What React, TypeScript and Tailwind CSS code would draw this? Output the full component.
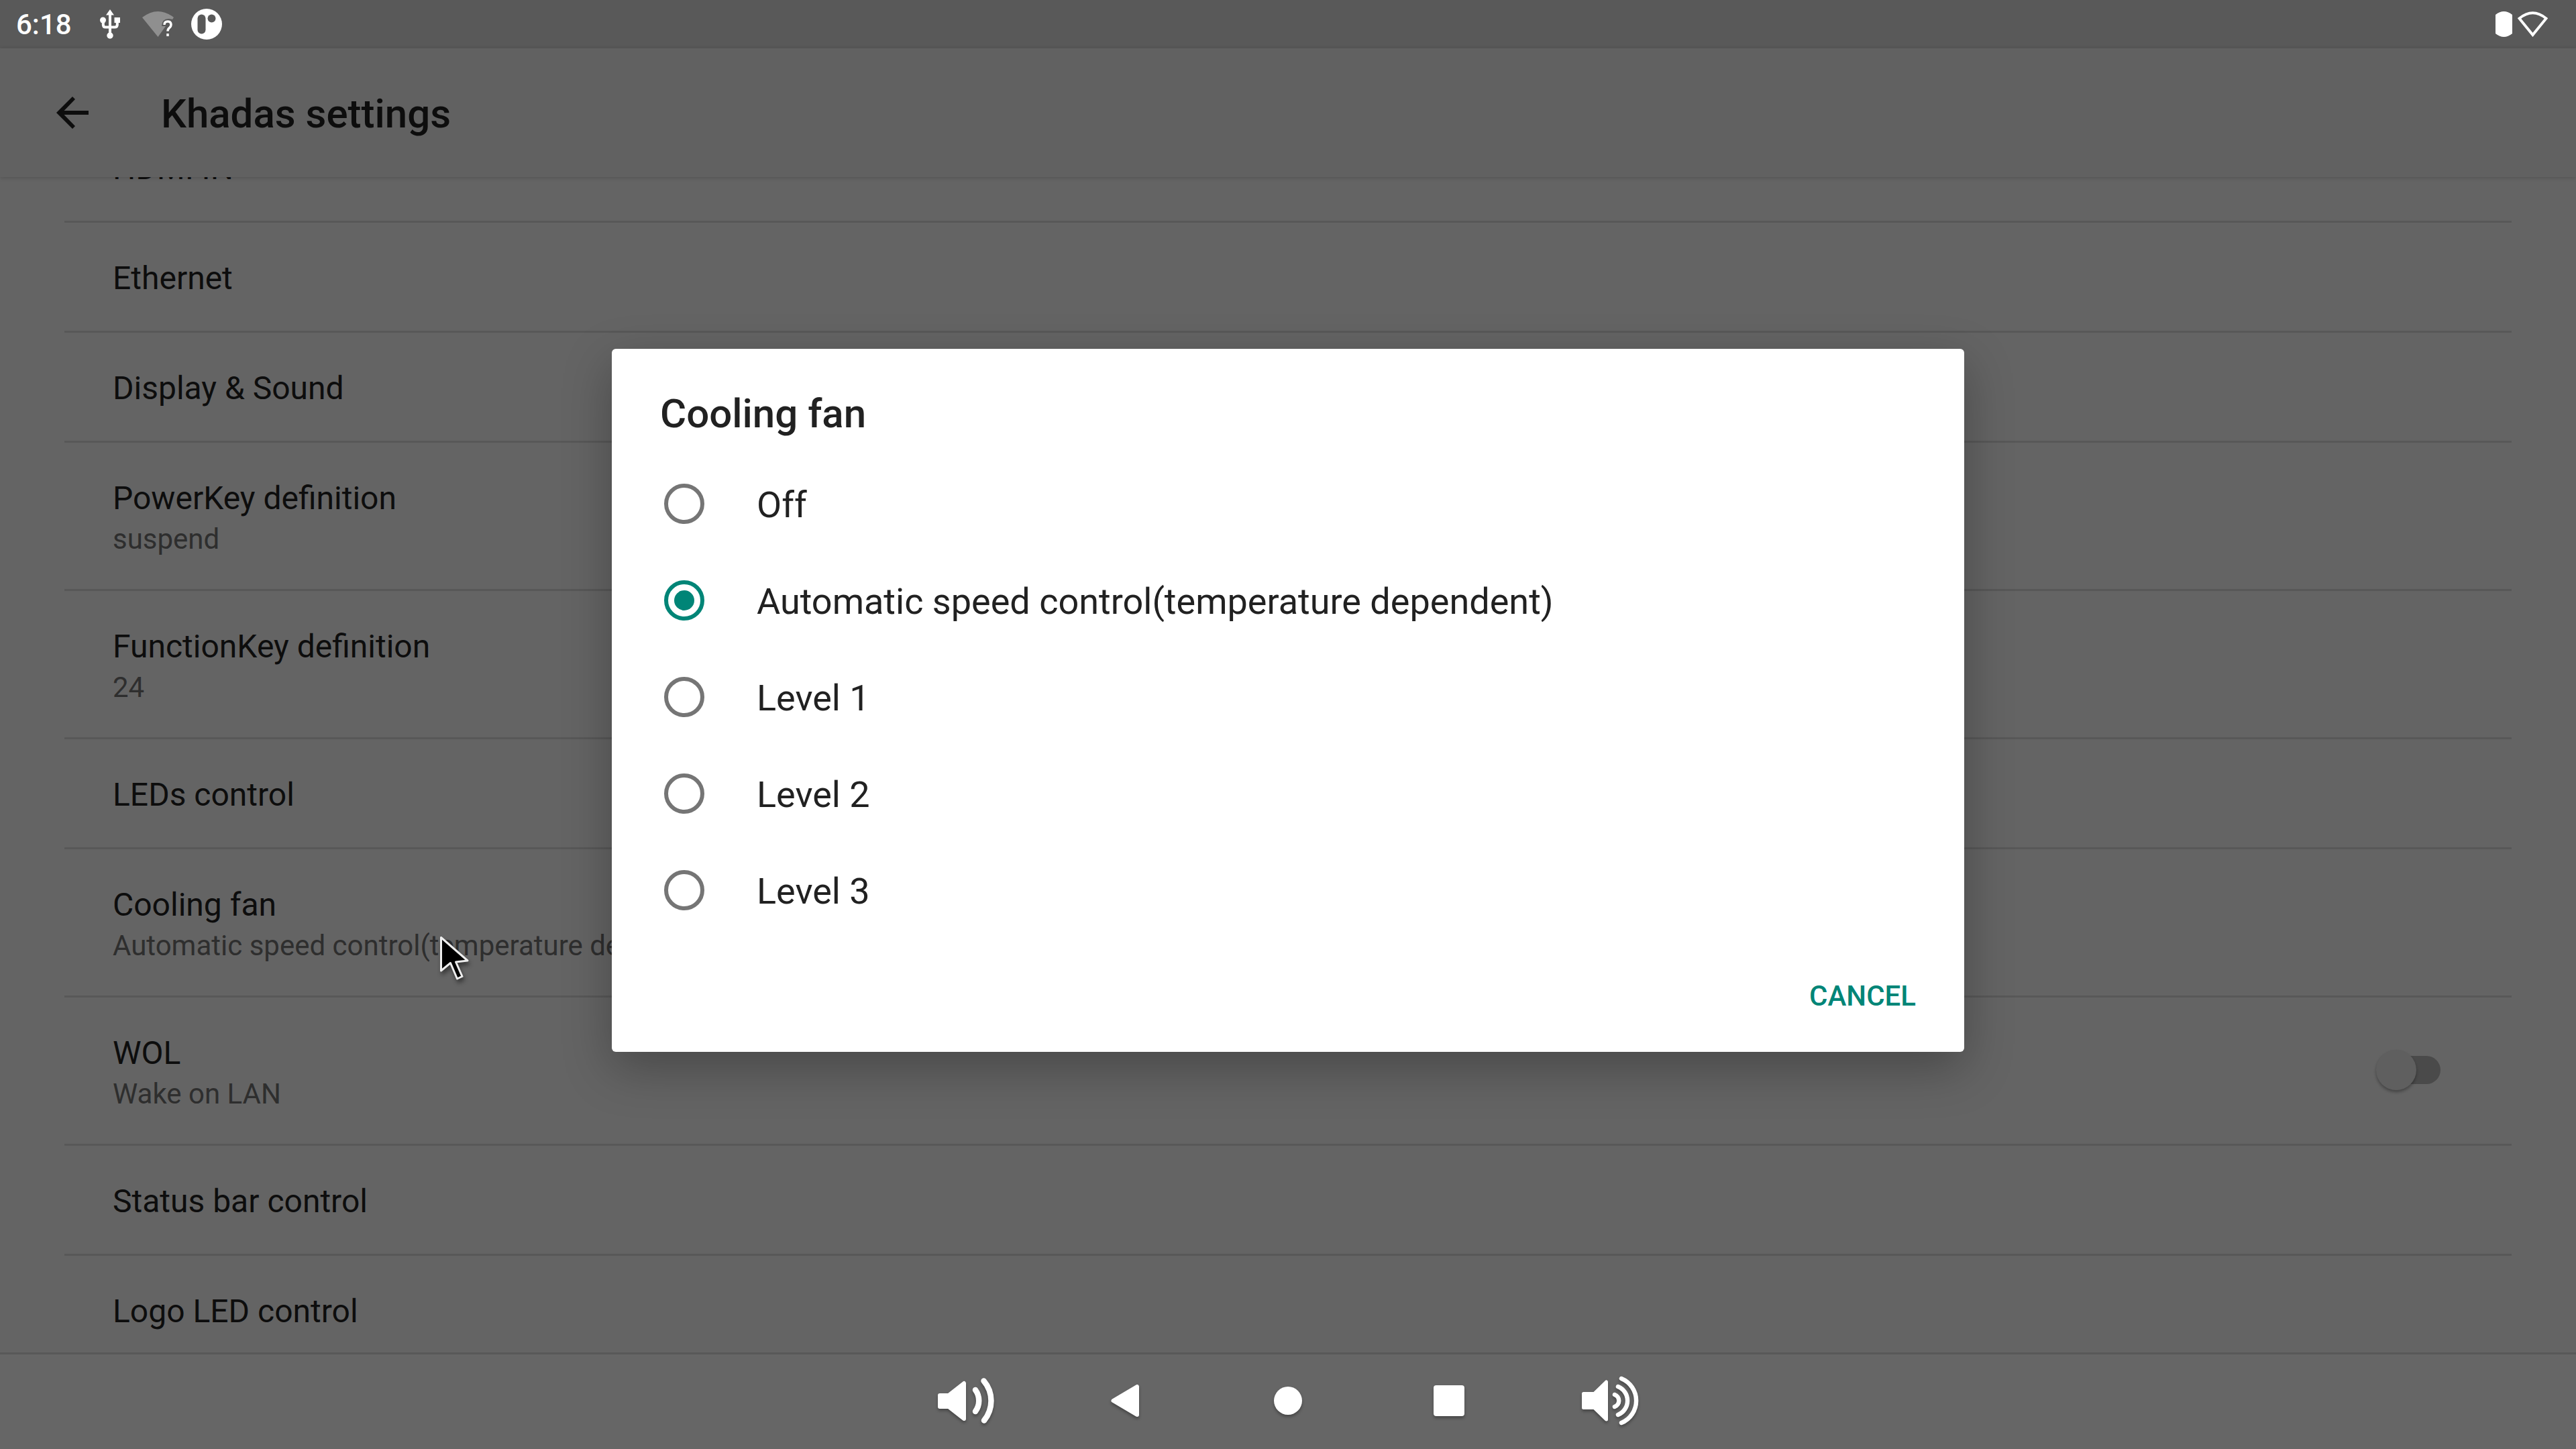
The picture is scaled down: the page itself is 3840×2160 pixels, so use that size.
import React from "react";

type Item = { title: string; summary?: string; toggle?: boolean };

const items: Item[] = [
  { title: "HDMI IN" },
  { title: "Ethernet" },
  { title: "Display & Sound" },
  { title: "PowerKey definition", summary: "suspend" },
  { title: "FunctionKey definition", summary: "24" },
  { title: "LEDs control" },
  { title: "Cooling fan", summary: "Automatic speed control(temperature dependent)" },
  { title: "WOL", summary: "Wake on LAN", toggle: true },
  { title: "Status bar control" },
  { title: "Logo LED control" },
];

const levels = ["Off", "Automatic speed control(temperature dependent)", "Level 1", "Level 2", "Level 3"];

function UsbIcon() {
  return (
    <svg viewBox="0 0 30 44" className="h-11 w-[30px]" fill="#fff" aria-hidden="true">
      <path d="M15 0l6 8.500H9z" />
      <circle cx="4.500" cy="16" r="4.500" />
      <path d="M21.500 12H30v8h-8.500z" />
      <circle cx="15" cy="39" r="4.700" />
      <path d="M15 6v32M4.800 17v6q0 3.500 3.500 3.500h13.500q4 0 4-3.500v-6" fill="none" stroke="#fff" strokeWidth="4" />
    </svg>
  );
}

function WifiUnknownIcon() {
  return (
    <svg viewBox="0 0 48 40" className="h-10 w-12" aria-hidden="true">
      <path d="M0 10Q23.500-8 47 10l-2 3q-15-4-16 10h6l-11.500 16z" fill="#8f8f8f" />
      <path d="M33 21q0-5 5-5t5 5q0 2.500-2.500 4.500t-2.500 5M38 34v4" fill="none" stroke="#fff" strokeWidth="3.500" />
    </svg>
  );
}

function AppIcon() {
  return (
    <svg viewBox="0 0 46 46" className="h-[46px] w-[46px]" aria-hidden="true">
      <circle cx="23" cy="23" r="23" fill="#fff" />
      <rect x="9.500" y="8.500" width="12" height="29" rx="6" fill="#595959" />
      <circle cx="30.500" cy="14.500" r="6" fill="#595959" />
    </svg>
  );
}

function StatusBar() {
  return (
    <div className="flex h-[72px] shrink-0 items-center justify-between bg-[#595959] pr-[42px] pl-6 text-white">
      <div className="flex items-center">
        <time className="w-[125px] pt-0.5 text-[42px] leading-[50px] font-medium">6:18</time>
        <div className="flex items-center gap-[26px]">
          <UsbIcon />
          <div className="flex items-center gap-[25px] pl-[7px]">
            <WifiUnknownIcon />
            <AppIcon />
          </div>
        </div>
      </div>
      <div className="flex items-center gap-2">
        <svg viewBox="0 0 25 38" className="h-[38px] w-[25px]" aria-hidden="true">
          <path d="M0 5Q12.500-5 25 5v28q-12.500 10-25 0z" fill="#fff" />
        </svg>
        <svg viewBox="0 0 45 38" className="h-[38px] w-[45px]" aria-hidden="true">
          <path d="M2.500 10.500Q22.500-6 42.500 10.500L22.500 35z" fill="none" stroke="#fff" strokeWidth="4" />
        </svg>
      </div>
    </div>
  );
}

function Header() {
  return (
    <header className="relative flex h-48 shrink-0 items-center bg-[#616161] pl-[72px] shadow-[0_1px_6px_#00000030]">
      <button type="button" aria-label="Back" className="flex w-[168px] items-center pl-3">
        <svg viewBox="0 0 48 48" className="h-12 w-12" fill="#0d0d0d" aria-hidden="true">
          <path d="M48 21H11.500L28 4 24 0 0 24l24 24 4-4L11.500 27H48z" />
        </svg>
      </button>
      <h1 className="pt-1 text-[60px] leading-[70px] font-medium">Khadas settings</h1>
    </header>
  );
}

function Row({ title, summary, toggle }: Item) {
  return (
    <li className="flex items-center justify-between border-t-3 border-[#585858] pt-[50px] pr-[106px] pb-[46px] pl-[72px]">
      <div>
        <div id={title} className="text-[48px] leading-[65px]">{title}</div>
        {summary && <div className="text-[42px] leading-[57px] text-[#2e2e2e]">{summary}</div>}
      </div>
      {toggle && (
        <input
          type="checkbox"
          role="switch"
          aria-labelledby={title}
          className="relative mb-1.5 h-[60px] w-24 appearance-none before:absolute before:top-[9px] before:right-0 before:h-[42px] before:w-[84px] before:rounded-full before:bg-[#4a4a4a] after:absolute after:top-0 after:left-0 after:size-[60px] after:rounded-full after:bg-[#5f5f5f] after:shadow-[0_3px_4px_#00000050]"
        />
      )}
    </li>
  );
}

function Dialog() {
  return (
    <div className="absolute inset-0 flex items-center justify-center pt-[72px] pb-36">
      <div className="w-[55%] px-12">
        <section
          role="dialog"
          aria-labelledby="dialog-title"
          className="rounded-md bg-white pt-[62px] pb-[58px] text-[#212121] shadow-[0_24px_72px_#00000048]"
        >
          <h2 id="dialog-title" className="px-[72px] text-[60px] leading-[70px] font-medium">Cooling fan</h2>
          <div role="radiogroup" aria-labelledby="dialog-title" className="pt-[27px]">
            {levels.map((level, i) => (
              <label key={level} className="flex h-36 items-center gap-[78px] pr-[72px] pl-[78px]">
                <input
                  type="radio"
                  name="fan"
                  defaultChecked={i === 1}
                  className="grid size-[60px] shrink-0 appearance-none place-items-center rounded-full border-6 border-[#757575] checked:border-[#008577] checked:before:size-[30px] checked:before:rounded-full checked:before:bg-[#008577]"
                />
                <span className="pt-1 text-[54px] leading-[64px]">{level}</span>
              </label>
            ))}
          </div>
          <div className="flex justify-end px-[72px] pt-[61px]">
            <button type="button" className="text-[42px] leading-[50px] font-medium text-[#008577]">CANCEL</button>
          </div>
        </section>
      </div>
    </div>
  );
}

function NavButton({ label, children }: { label: string; children: React.ReactNode }) {
  return (
    <button type="button" aria-label={label} className="flex w-60 items-center justify-center">
      <svg
        viewBox="0 0 90 90"
        className="size-[90px] drop-shadow-[0_3px_2px_#00000050]"
        fill="#fff"
        stroke="#fff"
        strokeLinecap="round"
        strokeLinejoin="round"
        aria-hidden="true"
      >
        {children}
      </svg>
    </button>
  );
}

function NavBar() {
  return (
    <nav className="flex h-36 shrink-0 justify-center border-t-3 border-[#585858] bg-[#666666] pb-[3px]">
      <NavButton label="Volume down">
        <path strokeWidth="6" d="M6 37h13L42 19v53L19 54H6z" />
        <g fill="none" strokeWidth="8.500">
          <path d="M59 29A27 27 0 0 1 59 61" />
          <path d="M71.500 15.500A46 46 0 0 1 72 74.500" />
        </g>
      </NavButton>
      <NavButton label="Back">
        <path strokeWidth="6" d="M24.500 45L60 24v42z" />
      </NavButton>
      <NavButton label="Home">
        <circle cx="45" cy="45" r="21" stroke="none" />
      </NavButton>
      <NavButton label="Recent apps">
        <rect x="22" y="22" width="46" height="46" rx="4" stroke="none" />
      </NavButton>
      <NavButton label="Volume up">
        <path strokeWidth="5" d="M5.500 34.500h16L39.500 17v56L21.500 55.500h-16z" />
        <g fill="none" strokeWidth="6.500">
          <path d="M52 36A9.600 9.600 0 0 1 52 54" />
          <path d="M57 24A22.700 22.700 0 0 1 57 66" />
          <path d="M62 12A35.700 35.700 0 0 1 62 78" />
        </g>
      </NavButton>
    </nav>
  );
}

function Cursor() {
  return (
    <svg
      viewBox="0 0 50 72"
      className="absolute top-[1393px] left-[654px] h-[72px] w-[50px] drop-shadow-[2px_5px_3px_#00000070]"
      aria-hidden="true"
    >
      <path
        d="M3.500 4.500V54l14-11.500L27.500 66l7.500-3.500L25.500 41l17.500-2z"
        fill="#000"
        stroke="#eee"
        strokeWidth="3"
        strokeLinejoin="round"
      />
    </svg>
  );
}

export default function App() {
  return (
    <div className="relative flex h-screen flex-col overflow-hidden bg-[#646464] font-[Roboto,sans-serif] text-[#0d0d0d]">
      <StatusBar />
      <Header />
      <main className="min-h-0 flex-1 overflow-hidden px-24">
        <ul className="-mt-[99px]">
          {items.map((item) => (
            <Row key={item.title} {...item} />
          ))}
        </ul>
      </main>
      <NavBar />
      <Dialog />
      <Cursor />
    </div>
  );
}
